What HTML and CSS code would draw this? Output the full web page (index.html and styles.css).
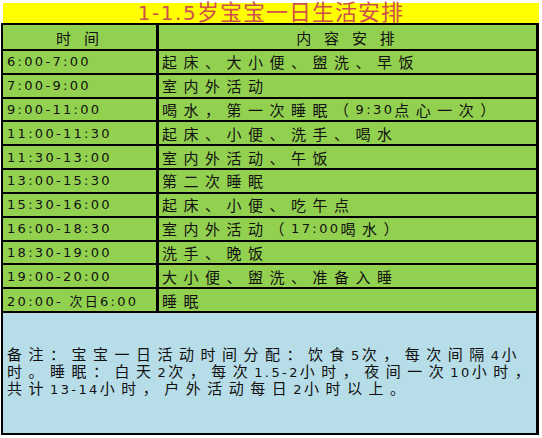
FILE: index.html
```html
<!DOCTYPE html>
<html lang="zh-CN">
<head>
<meta charset="utf-8">
<title>1-1.5岁宝宝一日生活安排</title>
<link rel="stylesheet" href="styles.css">
</head>
<body>
<div class="sheet">
  <div class="title"><span class="lat">1-1.5</span>岁宝宝一日生活安排</div>
  <div class="plan">
    <div class="cell time head">时 间</div>
    <div class="cell act head">内 容 安 排</div>

    <div class="cell time">6:00-7:00</div>
    <div class="cell act">起床、大小便、盥洗、早饭</div>

    <div class="cell time">7:00-9:00</div>
    <div class="cell act">室内外活动</div>

    <div class="cell time">9:00-11:00</div>
    <div class="cell act">喝水，第一次睡眠（<span class="lat">9:30</span>点心一次）</div>

    <div class="cell time">11:00-11:30</div>
    <div class="cell act">起床、小便、洗手、喝水</div>

    <div class="cell time">11:30-13:00</div>
    <div class="cell act">室内外活动、午饭</div>

    <div class="cell time">13:00-15:30</div>
    <div class="cell act">第二次睡眠</div>

    <div class="cell time">15:30-16:00</div>
    <div class="cell act">起床、小便、吃午点</div>

    <div class="cell time">16:00-18:30</div>
    <div class="cell act">室内外活动（<span class="lat">17:00</span>喝水）</div>

    <div class="cell time">18:30-19:00</div>
    <div class="cell act">洗手、晚饭</div>

    <div class="cell time">19:00-20:00</div>
    <div class="cell act">大小便、盥洗、准备入睡</div>

    <div class="cell time">20:00- 次日6:00</div>
    <div class="cell act">睡眠</div>

    <div class="cell note"><p>备注：宝宝一日活动时间分配：饮食<span class="lat">5</span>次，每次间隔<span class="lat">4</span>小<br>时。睡眠：白天<span class="lat">2</span>次，每次<span class="lat">1.5-2</span>小时，夜间一次<span class="lat">10</span>小时，<br>共计<span class="lat">13-14</span>小时，户外活动每日<span class="lat">2</span>小时以上。</p></div>
  </div>
</div>
</body>
</html>
```
FILE: styles.css
```css
body {
  margin: 0;
  background: #ffffff;
  font-family: "DejaVu Sans", "Noto Sans CJK SC", sans-serif;
  color: #111111;
}

.sheet {
  padding-top: 3px;
  width: 540px;
}

.title {
  margin-left: 3px;
  width: 536px;
  height: 20px;
  background: #ffff00;
  color: #d0504d;
  font-size: 22px;
  line-height: 20px;
  text-align: center;
  letter-spacing: 1px;
  white-space: nowrap;
}

.title .lat {
  font-size: 20px;
  letter-spacing: 1.5px;
}

.plan {
  margin-left: 1px;
  width: 538px;
  box-sizing: border-box;
  border-left: 2px solid #000;
  border-right: 3px solid #000;
  border-top: 2px solid #000;
  border-bottom: 2px solid #000;
  display: grid;
  grid-template-columns: 156px 1fr;
  grid-template-rows: 26px repeat(11, 23.82px) 120px;
}

.cell {
  box-sizing: border-box;
  border-bottom: 2px solid #000;
  background: #92d050;
  display: flex;
  align-items: center;
  white-space: nowrap;
  overflow: hidden;
}

.time {
  border-right: 3px solid #000;
  padding-left: 4px;
  font-size: 13px;
  letter-spacing: 2.3px;
}

.act {
  padding-left: 3px;
  font-size: 15px;
  letter-spacing: 6.5px;
}

.lat {
  font-size: 13px;
  letter-spacing: 2.4px;
}

.head {
  justify-content: center;
  padding-left: 0;
  font-size: 15px;
  letter-spacing: 4px;
}

.note {
  grid-column: 1 / -1;
  border-bottom: none;
  background: #b7dde8;
  padding-left: 4px;
  font-size: 15px;
  letter-spacing: 6.5px;
}

.note p {
  margin: 0;
  line-height: 17px;
}
```
